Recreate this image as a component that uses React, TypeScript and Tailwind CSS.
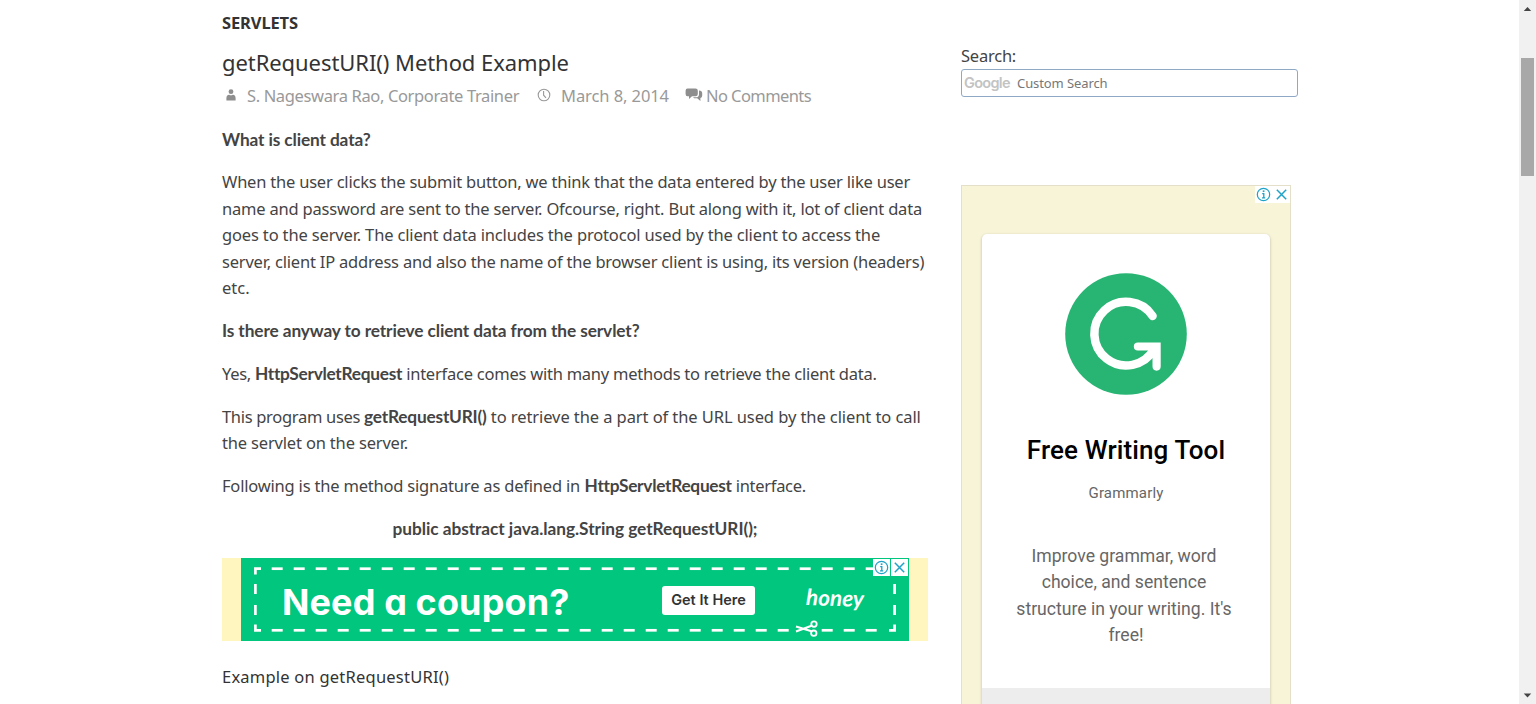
import type { ReactNode } from "react";

function InfoIcon() {
  return (
    <svg viewBox="0 0 16 16" className="size-[15px]" fill="none" stroke="#1fa3c7">
      <circle cx="8" cy="8" r="6.6" strokeWidth="1.3" />
      <path d="M6.6 7H8.3V11.4M6.4 11.5H9.8" strokeWidth="1.4" />
      <path d="M7.2 4.5H9" strokeWidth="1.8" />
    </svg>
  );
}

function CloseIcon() {
  return (
    <svg viewBox="0 0 16 16" className="size-[15px]" fill="none" stroke="#1fa3c7" strokeWidth="1.6">
      <path d="M3 3L13 13M13 3L3 13" />
    </svg>
  );
}

function UserIcon() {
  return (
    <svg viewBox="0 0 10 12" className="h-[12px] w-[10px]" fill="#8e8e8e">
      <circle cx="5" cy="2.7" r="2.4" />
      <path d="M0.4 11.5V9.2Q0.4 6 3.2 5.7Q5 6.8 6.8 5.7Q9.6 6 9.6 9.2V11.5Z" />
    </svg>
  );
}

function ClockIcon() {
  return (
    <svg viewBox="0 0 14 14" className="size-[14px]" fill="none" stroke="#999" strokeWidth="1.1">
      <circle cx="7" cy="7" r="5.8" />
      <path d="M6.6 3V7.2L9 9.8" />
    </svg>
  );
}

function CommentsIcon() {
  return (
    <svg viewBox="0 0 18 14" className="h-[14px] w-[18px]" fill="#8e8e8e">
      <path d="M2.5 0.5H10.5Q12.8 0.5 12.8 2.8V6Q12.8 8.3 10.5 8.3H7L4 11V8.3H2.5Q0.6 8.3 0.6 6V2.8Q0.6 0.5 2.5 0.5Z" />
      <path d="M14 2.5Q17.2 2.8 17.2 5.2V7.8Q17.2 9.8 15.4 10.1V13L12.2 10.2H9.2L8 9.3H11Q14 9.3 14 6.2Z" />
    </svg>
  );
}

function Line({ children, className = "" }: { children: ReactNode; className?: string }) {
  return <span className={`block whitespace-pre ${className}`}>{children}</span>;
}

function Strong({ children, className = "" }: { children: ReactNode; className?: string }) {
  return (
    <strong className={`font-['Lato',sans-serif] text-[17.3px] leading-none font-bold ${className}`}>{children}</strong>
  );
}

const dashes = Array.from({ length: 28 }, (_, i) => 30.7 + i * 22);

function CouponFrame() {
  return (
    <svg viewBox="0 0 668 83" className="absolute inset-0 h-full w-full" fill="none" stroke="#fff" strokeWidth="2.7">
      <path d="M14.4 16.5V10.7H20M14.4 66.5V72.3H20M653.6 66.5V72.3H648" />
      <path d="M14.4 26V36M14.4 47V57M653.6 26V36M653.6 47V57" />
      {dashes.map((x) => (
        <path key={x} d={`M${x} 10.7h11`} />
      ))}
      {dashes
        .filter((_, i) => i !== 24)
        .map((x) => (
          <path key={x} d={`M${x} 72.3h11`} />
        ))}
      <g strokeWidth="1.8">
        <path d="M555 68.5L570.5 73.2M555 73.5L570.5 67.8" strokeWidth="2.1" />
        <circle cx="573" cy="66.1" r="2.7" />
        <circle cx="572.8" cy="75.2" r="2.7" />
      </g>
    </svg>
  );
}

function GrammarlyLogo() {
  return (
    <svg viewBox="0 0 122 122" className="mx-auto mt-[38.5px] block size-[122px]" fill="none">
      <circle cx="61" cy="61" r="60.8" fill="#28b473" />
      <path
        d="M87.6 43A31.8 31.8 0 1 0 89 76"
        stroke="#fff"
        strokeWidth="8.5"
        strokeLinecap="round"
      />
      <path d="M72.9 69.4H95.7V93.6A4.1 4.1 0 0 1 87.5 93.6V81L83 77.6H72.9A4.1 4.1 0 0 1 72.9 69.4Z" fill="#fff" />
    </svg>
  );
}

function Article() {
  return (
    <main className="w-[706px] shrink-0 text-[16.5px] leading-[26.4px] text-[#444]">
      <div className="pt-[10px] font-bold tracking-[-0.12px] text-[#333]">SERVLETS</div>
      <h1 className="mt-[10px] text-[22px] leading-[32px] tracking-[-0.07px] text-[#333]">
        getRequestURI() Method Example
      </h1>
      <div className="mt-[4px] flex h-[28px] items-center whitespace-nowrap text-[#999]">
        <span className="-mt-[2px] ml-[4px]"><UserIcon /></span>
        <span className="ml-[11px] w-[290px] tracking-[-0.36px]">S. Nageswara Rao, Corporate Trainer</span>
        <span className="-mt-[2px]"><ClockIcon /></span>
        <span className="ml-[10px] w-[124px] tracking-[-0.08px]">March 8, 2014</span>
        <span className="-mt-[3px]"><CommentsIcon /></span>
        <span className="ml-[3px] tracking-[-0.58px]">No Comments</span>
      </div>
      <div className="mt-[16px] flex flex-col gap-[16.5px]">
        <p><Line><Strong className="relative top-px tracking-[-0.12px]">What is client data?</Strong></Line></p>
        <p>
          <Line className="tracking-[-0.212px]">When the user clicks the submit button, we think that the data entered by the user like user</Line>
          <Line className="tracking-[-0.205px]">name and password are sent to the server. Ofcourse, right. But along with it, lot of client data</Line>
          <Line className="tracking-[-0.155px]">goes to the server. The client data includes the protocol used by the client to access the</Line>
          <Line className="tracking-[-0.2px]">server, client IP address and also the name of the browser client is using, its version (headers)</Line>
          <Line>etc.</Line>
        </p>
        <p><Line><Strong className="tracking-[-0.11px]">Is there anyway to retrieve client data from the servlet?</Strong></Line></p>
        <p>
          <Line className="tracking-[-0.238px]">
            <span className="tracking-[-0.3px]">Yes, </span>
            <Strong className="tracking-[-0.28px]">HttpServletRequest</Strong> interface comes with many methods to retrieve the client data.
          </Line>
        </p>
        <p>
          <Line className="tracking-[-0.083px]">
            <span className="tracking-[-0.31px]">This program uses </span>
            <Strong className="tracking-[-0.2px]">getRequestURI()</Strong> to retrieve the a part of the URL used by the client to call
          </Line>
          <Line className="tracking-[-0.173px]">the servlet on the server.</Line>
        </p>
        <p>
          <Line className="tracking-[-0.198px]">
            Following is the method signature as defined in <Strong className="ml-[0.5px] tracking-[-0.28px]">HttpServletRequest</Strong><span className="tracking-[-0.3px]"> interface.</span>
          </Line>
        </p>
        <p className="text-center"><Line><Strong className="tracking-[-0.055px]">public abstract java.lang.String getRequestURI();</Strong></Line></p>
      </div>
      <section className="mt-[16px] flex h-[83px] justify-center bg-[#fff6bf]">
        <div className="relative flex w-[668px] items-center bg-[#00c67e]">
          <CouponFrame />
          <span className="ml-[41px] w-[380px] pt-[4px] font-['Inter',sans-serif] text-[36px] leading-none font-bold tracking-[0.12px] whitespace-nowrap text-white [font-feature-settings:'cv11']">
            Need a coupon?
          </span>
          <button className="relative mt-px flex h-[29px] w-[93px] items-center justify-center rounded-[3px] bg-white font-['Inter',sans-serif] text-[14.5px] font-semibold whitespace-nowrap text-[#333]">
            Get It Here
          </button>
          <span className="ml-[51px] rotate-2 pb-[3px] font-['Lato',sans-serif] text-[22.5px] leading-none font-bold text-white italic">
            honey
          </span>
          <div className="absolute top-[1px] right-[1px] flex gap-px">
            <span className="bg-white p-px"><InfoIcon /></span>
            <span className="bg-white p-px"><CloseIcon /></span>
          </div>
        </div>
      </section>
      <p className="mt-[23px] tracking-[0.22px] text-[#333]">Example on getRequestURI()</p>
    </main>
  );
}

function Sidebar() {
  return (
    <aside className="ml-[33px] w-[337px] shrink-0 pt-[42px]">
      <div className="text-[16.5px] leading-[27px] tracking-[-0.23px] text-[#444]">Search:</div>
      <div className="flex h-[28px] items-center rounded-[3px] border border-[#8fa9c4] pl-[2px]">
        <span className="w-[53px] pt-px font-['Inter',sans-serif] text-[14.5px] leading-none font-semibold tracking-[-0.7px] text-[#c3c3c3]">Google</span>
        <span className="pt-px text-[13px] tracking-[-0.09px] text-[#777]">Custom Search</span>
      </div>
      <section className="relative mt-[88px] flex h-[560px] w-[330px] flex-col border border-[#e3dfc9] bg-[#f8f4d8] px-[20px] pt-[48px] font-['Roboto',sans-serif]">
        <div className="absolute top-0 right-0 flex h-[17px] items-center gap-[3px] bg-white px-px">
          <InfoIcon />
          <CloseIcon />
        </div>
        <div className="flex-1 rounded-[5px] bg-white text-center shadow-[0_1px_3px_rgba(0,0,0,0.25)]">
          <GrammarlyLogo />
          <h2 className="mt-[39.5px] text-[26px] leading-[32px] font-medium tracking-[0.12px] text-black">Free Writing Tool</h2>
          <div className="mt-[17px] text-[15px] leading-[20px] tracking-[0.17px] text-[#666]">Grammarly</div>
          <p className="mt-[40px] pr-[4px] text-[17.6px] leading-[26.4px] text-[#666]">
            Improve grammar, word
            <br />
            choice, and sentence
            <br />
            structure in your writing. It's
            <br />
            <span className="pl-[4px]">free!</span>
          </p>
          <div className="mt-[39px] h-[80px] bg-[#ededed]" />
        </div>
      </section>
    </aside>
  );
}

function Scrollbar() {
  return (
    <div className="ml-auto flex w-[17px] shrink-0 flex-col items-center bg-[#f1f1f1]">
      <svg viewBox="0 0 17 17" className="size-[17px]" fill="#444"><path d="M4.8 11L8.5 7L12.2 11Z" /></svg>
      <div className="mt-[40.5px] h-[118.5px] w-[13px] bg-[#a8a8a8]" />
      <svg viewBox="0 0 17 17" className="mt-auto size-[17px]" fill="#444"><path d="M4.8 6.5L8.5 10.5L12.2 6.5Z" /></svg>
    </div>
  );
}

export default function App() {
  return (
    <div className="flex h-[704px] w-[1536px] overflow-hidden bg-white pl-[222px] font-['Noto_Sans',sans-serif]">
      <Article />
      <Sidebar />
      <Scrollbar />
    </div>
  );
}
